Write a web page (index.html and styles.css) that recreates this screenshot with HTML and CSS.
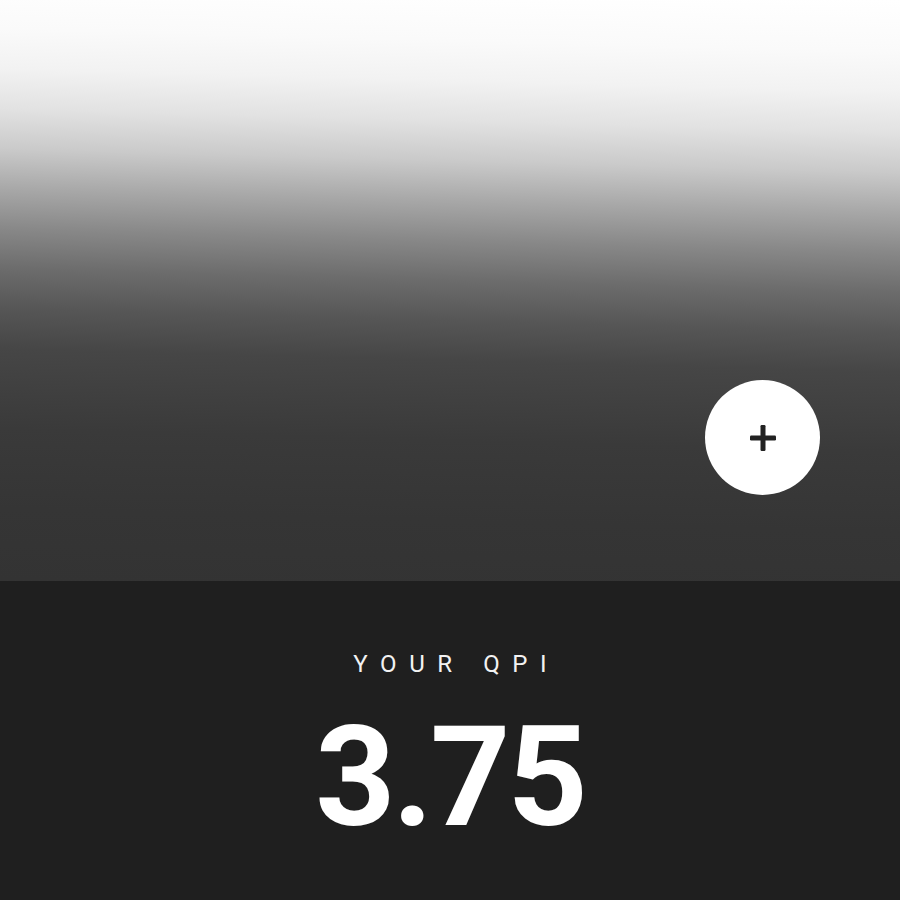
FILE: index.html
```html
<!DOCTYPE html>
<html>
<head>
<meta charset="utf-8">
<link rel="stylesheet" href="styles.css">
</head>
<body>
<div class="page">
  <div class="hero">
    <button class="fab" aria-label="Add">
      <svg width="28" height="28" viewBox="0 0 28 28"><rect x="11.5" y="1" width="5" height="26" rx="1.2" fill="#222"/><rect x="1" y="11.5" width="26" height="5" rx="1.2" fill="#222"/></svg>
    </button>
  </div>
  <div class="summary">
    <div class="label">YOUR QPI</div>
    <div class="value">3.75</div>
  </div>
</div>
</body>
</html>
```
FILE: styles.css
```css
html, body {
  margin: 0;
  padding: 0;
  background: #1f1f1f;
  font-family: Roboto, "Liberation Sans", sans-serif;
}
.page {
  width: 900px;
  height: 900px;
  display: flex;
  flex-direction: column;
}
.hero {
  height: 581px;
  position: relative;
  background: linear-gradient(181.5deg,
    #ffffff 0px,
    #fafafa 52px,
    #f2f2f2 92px,
    #e2e2e2 132px,
    #cacaca 172px,
    #a8a8a8 212px,
    #888888 252px,
    #6c6c6c 292px,
    #565656 332px,
    #464646 372px,
    #3a3a3a 452px,
    #353535 532px,
    #333333 604px);
}
.fab {
  position: absolute;
  left: 705px;
  top: 380px;
  width: 115px;
  height: 115px;
  border-radius: 50%;
  border: none;
  background: #ffffff;
  padding: 0;
  display: flex;
  align-items: center;
  justify-content: center;
}
.fab svg {
  display: block;
  width: 28px;
  height: 28px;
}
.summary {
  flex: 1;
  background: #1f1f1f;
  display: flex;
  flex-direction: column;
  align-items: center;
  padding-top: 68px;
}
.label {
  color: #f2f2f2;
  font-size: 24px;
  letter-spacing: 12.6px;
  margin-right: -12.6px;
  line-height: 30px;
}
.value {
  color: #ffffff;
  font-size: 140px;
  font-weight: 700;
  line-height: 1;
  margin-top: 28px;
  letter-spacing: -3px;
}
```
